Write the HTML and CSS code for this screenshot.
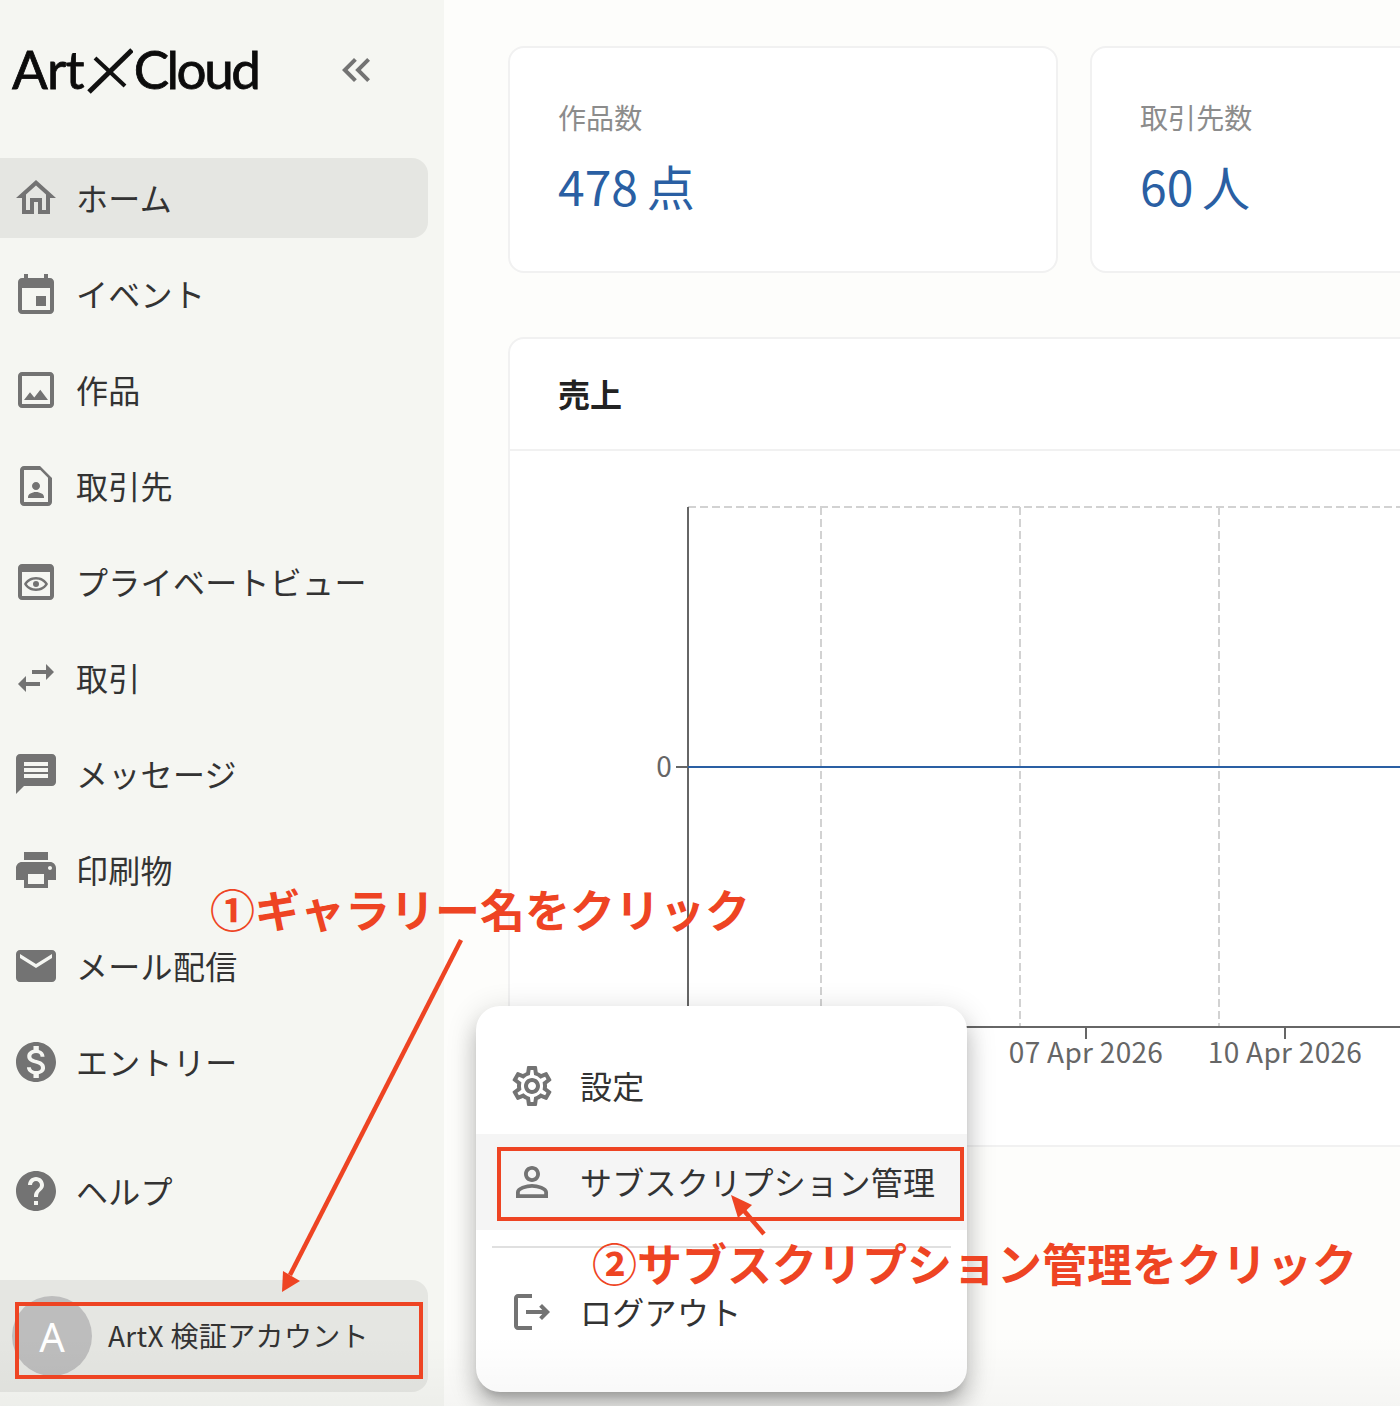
FILE: index.html
```html
<!DOCTYPE html>
<html lang="ja">
<head>
<meta charset="utf-8">
<title>ArtXCloud</title>
<link rel="stylesheet" href="styles.css">
</head>
<body>
<div class="page">
  <aside class="sidebar">
    <div class="brand">
      <div class="logo"><span class="logo-art">Art</span><svg class="logo-x" viewBox="0 0 46 46"><path d="M2 44 L45 2" stroke="#111" stroke-width="5" fill="none"/><path d="M8 10 L38 38" stroke="#111" stroke-width="4" fill="none"/></svg><span>Cloud</span></div>
      <svg class="icon collapse" viewBox="0 0 24 24"><path d="M17.59 18L19 16.59 14.42 12 19 7.41 17.59 6l-6 6z"/><path d="M11 18l1.41-1.41L7.83 12l4.58-4.58L11 6l-6 6z"/></svg>
    </div>
    <nav class="nav">
      <a class="nav-item active"><svg class="icon" viewBox="0 0 24 24"><path d="M12 5.69l5 4.5V18h-2v-6H9v6H7v-7.81l5-4.5M12 3L2 12h3v8h6v-6h2v6h6v-8h3L12 3z"/></svg><span>ホーム</span></a>
      <a class="nav-item"><svg class="icon" viewBox="0 0 24 24"><path d="M17 13h-5v5h5v-5zM16 2v2H8V2H6v2H5c-1.11 0-1.99.9-1.99 2L3 20c0 1.1.89 2 2 2h14c1.1 0 2-.9 2-2V6c0-1.1-.9-2-2-2h-1V2h-2zm3 18H5V9h14v11z"/></svg><span>イベント</span></a>
      <a class="nav-item"><svg class="icon" viewBox="0 0 24 24"><path d="M19 5v14H5V5h14m0-2H5c-1.1 0-2 .9-2 2v14c0 1.1.9 2 2 2h14c1.1 0 2-.9 2-2V5c0-1.1-.9-2-2-2zm-4.86 8.86l-3 3.87L9 13.14 6 17h12l-3.86-5.14z"/></svg><span>作品</span></a>
      <a class="nav-item"><svg class="icon" viewBox="0 0 24 24"><path d="M14.17 4L18 7.83V20H6V4h8.17M14 2H6c-1.1 0-2 .9-2 2v16c0 1.1.9 2 2 2h12c1.1 0 2-.9 2-2V8l-6-6zM12 14c1.1 0 2-.9 2-2s-.9-2-2-2-2 .9-2 2 .9 2 2 2zm4 3.58c0-.81-.48-1.53-1.22-1.85C14.01 15.36 13.03 15 12 15s-2.01.36-2.78.73C8.48 16.05 8 16.77 8 17.58V18h8v-.42z"/></svg><span>取引先</span></a>
      <a class="nav-item"><svg class="icon" viewBox="0 0 24 24"><path fill-rule="evenodd" d="M19 3H5c-1.11 0-2 .9-2 2v14c0 1.1.89 2 2 2h14c1.1 0 2-.9 2-2V5c0-1.1-.89-2-2-2zm0 16H5V7h14v12zm-7-9.500c-2.700 0-5 1.400-6 3.500 1 2.100 3.300 3.500 6 3.500s5-1.400 6-3.500c-1-2.100-3.300-3.500-6-3.500zm0 1.200c2 0 3.700.9 4.600 2.300-.9 1.400-2.600 2.300-4.600 2.300s-3.700-.9-4.600-2.300c.9-1.400 2.600-2.300 4.600-2.300zm0 .8a1.500 1.500 0 1 0 0 3 1.500 1.500 0 0 0 0-3z"/></svg><span>プライベートビュー</span></a>
      <a class="nav-item"><svg class="icon" viewBox="0 0 24 24"><path d="M6.99 11L3 15l3.99 4v-3H14v-2H6.99v-3zM21 9l-3.99-4v3H10v2h7.01v3L21 9z"/></svg><span>取引</span></a>
      <a class="nav-item"><svg class="icon" viewBox="0 0 24 24"><path d="M20 2H4c-1.1 0-1.99.9-1.99 2L2 22l4-4h14c1.1 0 2-.9 2-2V4c0-1.1-.9-2-2-2zm-2 12H6v-2h12v2zm0-3H6V9h12v2zm0-3H6V6h12v2z"/></svg><span>メッセージ</span></a>
      <a class="nav-item"><svg class="icon" viewBox="0 0 24 24"><path d="M19 8H5c-1.66 0-3 1.34-3 3v6h4v4h12v-4h4v-6c0-1.66-1.34-3-3-3zm-3 11H8v-5h8v5zm3-7c-.55 0-1-.45-1-1s.45-1 1-1 1 .45 1 1-.45 1-1 1zm-1-9H6v4h12V3z"/></svg><span>印刷物</span></a>
      <a class="nav-item"><svg class="icon" viewBox="0 0 24 24"><path d="M20 4H4c-1.1 0-1.99.9-1.99 2L2 18c0 1.1.9 2 2 2h16c1.1 0 2-.9 2-2V6c0-1.1-.9-2-2-2zm0 4l-8 5-8-5V6l8 5 8-5v2z"/></svg><span>メール配信</span></a>
      <a class="nav-item"><svg class="icon" viewBox="0 0 24 24"><path d="M12 2C6.48 2 2 6.48 2 12s4.48 10 10 10 10-4.48 10-10S17.52 2 12 2zm1.41 16.09V20h-2.67v-1.93c-1.71-.36-3.16-1.46-3.27-3.4h1.96c.1 1.05.82 1.87 2.65 1.87 1.96 0 2.4-.98 2.4-1.59 0-.83-.44-1.61-2.67-2.14-2.48-.6-4.18-1.62-4.18-3.67 0-1.72 1.39-2.84 3.11-3.21V4h2.67v1.95c1.86.45 2.79 1.86 2.85 3.39H14.3c-.05-1.11-.64-1.87-2.22-1.87-1.5 0-2.4.68-2.4 1.64 0 .84.65 1.39 2.67 1.91s4.18 1.39 4.18 3.91c-.01 1.83-1.38 2.83-3.12 3.16z"/></svg><span>エントリー</span></a>
      <a class="nav-item help"><svg class="icon" viewBox="0 0 24 24"><path d="M12 2C6.48 2 2 6.48 2 12s4.48 10 10 10 10-4.48 10-10S17.52 2 12 2zm1 17h-2v-2h2v2zm2.07-7.75l-.9.92C13.45 12.9 13 13.5 13 15h-2v-.5c0-1.1.45-2.1 1.17-2.83l1.24-1.26c.37-.36.59-.86.59-1.41 0-1.1-.9-2-2-2s-2 .9-2 2H8c0-2.21 1.79-4 4-4s4 1.79 4 4c0 .88-.36 1.68-.93 2.25z"/></svg><span>ヘルプ</span></a>
    </nav>
    <div class="account">
      <div class="avatar">A</div>
      <span class="account-name">ArtX 検証アカウント</span>
    </div>
  </aside>

  <main class="main">
    <section class="stats">
      <div class="card stat"><div class="stat-label">作品数</div><div class="stat-value">478 点</div></div>
      <div class="card stat"><div class="stat-label">取引先数</div><div class="stat-value">60 人</div></div>
    </section>
    <section class="card sales">
      <h2 class="sales-title">売上</h2>
      <svg class="chart" viewBox="510 451 1000 694">
        <path class="grid" d="M688 507H1500M821 507V1027M1020 507V1027M1219 507V1027"/>
        <path class="axis" d="M688 507V1027H1500M676 767H688M1086 1027V1039M1285 1027V1039"/>
        <path class="zero" d="M688 767H1500"/>
        <text class="tick" x="672" y="777" text-anchor="end">0</text>
        <text class="tick" x="1086" y="1063" text-anchor="middle">07 Apr 2026</text>
        <text class="tick" x="1285" y="1063" text-anchor="middle">10 Apr 2026</text>
      </svg>
    </section>
  </main>

  <div class="menu">
    <a class="menu-item"><svg class="icon" viewBox="0 0 24 24"><path d="M19.43 12.98c.04-.32.07-.64.07-.98 0-.34-.03-.66-.07-.98l2.11-1.65c.19-.15.24-.42.12-.64l-2-3.46c-.09-.16-.26-.25-.44-.25-.06 0-.12.01-.17.03l-2.49 1c-.52-.4-1.08-.73-1.69-.98l-.38-2.65C14.46 2.18 14.25 2 14 2h-4c-.25 0-.46.18-.49.42l-.38 2.65c-.61.25-1.17.59-1.69.98l-2.49-1c-.06-.02-.12-.03-.18-.03-.17 0-.34.09-.43.25l-2 3.46c-.13.22-.07.49.12.64l2.11 1.65c-.04.32-.07.65-.07.98 0 .33.03.66.07.98l-2.11 1.65c-.19.15-.24.42-.12.64l2 3.46c.09.16.26.25.44.25.06 0 .12-.01.17-.03l2.49-1c.52.4 1.08.73 1.69.98l.38 2.65c.03.24.24.42.49.42h4c.25 0 .46-.18.49-.42l.38-2.65c.61-.25 1.17-.59 1.69-.98l2.49 1c.06.02.12.03.18.03.17 0 .34-.09.43-.25l2-3.46c.12-.22.07-.49-.12-.64l-2.11-1.65zm-1.98-1.71c.04.31.05.52.05.73 0 .21-.02.43-.05.73l-.14 1.13.89.7 1.08.84-.7 1.21-1.27-.51-1.04-.42-.9.68c-.43.32-.84.56-1.25.73l-1.06.43-.16 1.13-.2 1.35h-1.4l-.19-1.35-.16-1.13-1.06-.43c-.43-.18-.83-.41-1.23-.71l-.91-.7-1.06.43-1.27.51-.7-1.21 1.08-.84.89-.7-.14-1.13c-.03-.31-.05-.54-.05-.74s.02-.43.05-.73l.14-1.13-.89-.7-1.08-.84.7-1.21 1.27.51 1.04.42.9-.68c.43-.32.84-.56 1.25-.73l1.06-.43.16-1.13.2-1.35h1.39l.19 1.35.16 1.13 1.06.43c.43.18.83.41 1.23.71l.91.7 1.06-.43 1.27-.51.7 1.21-1.07.85-.89.7.14 1.13zM12 8c-2.21 0-4 1.79-4 4s1.79 4 4 4 4-1.79 4-4-1.79-4-4-4zm0 6c-1.1 0-2-.9-2-2s.9-2 2-2 2 .9 2 2-.9 2-2 2z"/></svg><span>設定</span></a>
    <a class="menu-item hover"><svg class="icon" viewBox="0 0 24 24"><path d="M12 5.900c1.160 0 2.100.94 2.100 2.100s-.94 2.100-2.100 2.100S9.900 9.160 9.900 8s.94-2.100 2.100-2.100m0 9c2.970 0 6.100 1.460 6.100 2.100v1.100H5.900V17c0-.64 3.130-2.100 6.100-2.100M12 4C9.790 4 8 5.790 8 8s1.790 4 4 4 4-1.790 4-4-1.790-4-4-4zm0 9c-2.670 0-8 1.340-8 4v3h16v-3c0-2.660-5.330-4-8-4z"/></svg><span>サブスクリプション管理</span></a>
    <hr class="menu-divider">
    <a class="menu-item"><svg class="icon" viewBox="0 0 24 24"><path d="M17 8l-1.410 1.410L17.170 11H9v2h8.170l-1.580 1.580L17 16l4-4-4-4zM5 5h7V3H5c-1.100 0-2 .9-2 2v14c0 1.100.9 2 2 2h7v-2H5V5z"/></svg><span>ログアウト</span></a>
  </div>

  <div class="page-fade"></div>
  <div class="note note-one">①ギャラリー名をクリック</div>
  <div class="note note-two">②サブスクリプション管理をクリック</div>
  <div class="mark mark-account"></div>
  <div class="mark mark-sub"></div>
  <svg class="arrows" viewBox="0 0 1400 1406">
    <path class="arrow-line" d="M461 940L290 1275"/>
    <path class="arrow-head" d="M282 1292L283 1271L300 1281z"/>
    <path class="arrow-line" d="M764 1234L740 1206"/>
    <path class="arrow-head" d="M731 1195L752 1205L738 1218z"/>
  </svg>
</div>
</body>
</html>
```
FILE: styles.css
```css
* { box-sizing: border-box; }
html, body { margin: 0; padding: 0; }
body {
  font-family: "Noto Sans CJK JP", "Noto Sans", sans-serif;
  color: #333;
  background: #fdfdfb;
}
.page {
  position: relative;
  display: flex;
  width: 1400px;
  height: 1406px;
  overflow: hidden;
}
.icon {
  flex: none;
  width: 48px;
  height: 48px;
  fill: #737373;
}

/* sidebar */
.sidebar {
  flex: none;
  display: flex;
  flex-direction: column;
  width: 444px;
  height: 100%;
  background: #f5f6f2;
}
.brand {
  display: flex;
  align-items: center;
  height: 158px;
  padding: 0 0 18px 12px;
}
.logo {
  display: flex;
  align-items: center;
  width: 320px;
  margin-top: -3px;
  font-family: Lato, "Noto Sans", sans-serif;
  font-size: 53px;
  line-height: 60px;
  letter-spacing: -2.5px;
  color: #0c0c0c;
  -webkit-text-stroke: .8px #0c0c0c;
}
.logo-art { letter-spacing: -.8px; }
.logo-x {
  flex: none;
  width: 46px;
  height: 46px;
  margin: 5px 1px 0 3px;
}
.nav {
  display: flex;
  flex-direction: column;
  gap: 16px;
}
.nav-item {
  display: flex;
  align-items: center;
  gap: 16px;
  width: 428px;
  height: 80px;
  padding-left: 12px;
  border-radius: 0 16px 16px 0;
  font-size: 32px;
  line-height: 48px;
  letter-spacing: .3px;
}
.nav-item span { padding-bottom: 2px; }
.nav-item.active { background: #e5e6e2; }
.nav-item.help { margin-top: 33px; }
.account {
  display: flex;
  align-items: center;
  gap: 16px;
  width: 428px;
  height: 112px;
  margin-top: 49px;
  padding-left: 12px;
  border-radius: 0 16px 16px 0;
  background: #e5e6e2;
}
.avatar {
  flex: none;
  display: flex;
  align-items: center;
  justify-content: center;
  width: 80px;
  height: 80px;
  border-radius: 50%;
  background: #bdbdbd;
  color: #fff;
  font-family: "Noto Sans", sans-serif;
  font-size: 40px;
}
.account-name { padding-bottom: 2px; font-size: 28px; line-height: 40px; letter-spacing: .35px; }

/* main */
.main {
  flex: none;
  width: 956px;
  padding: 46px 0 0 64px;
  overflow: hidden;
}
.stats {
  display: flex;
  gap: 32px;
  width: 1300px;
}
.card {
  flex: none;
  background: #fff;
  border: 2px solid #f1f1f1;
  border-radius: 16px;
}
.stat {
  width: 550px;
  height: 227px;
  padding: 47px 48px;
}
.stat-label {
  font-size: 28px;
  line-height: 44px;
  letter-spacing: .1px;
  color: #8c8c8c;
}
.stat-value {
  margin-top: 14px;
  font-size: 48px;
  line-height: 64px;
  word-spacing: -2px;
  color: #2a5fa3;
}
.sales {
  width: 1300px;
  margin-top: 64px;
  height: 810px;
}
.sales-title {
  margin: 0;
  height: 112px;
  padding: 0 48px;
  font-size: 32px;
  font-weight: 700;
  line-height: 108px;
  color: #222;
  border-bottom: 2px solid #f1f1f1;
}
.chart {
  display: block;
  width: 1000px;
  height: 694px;
}
.grid { fill: none; stroke: #d2d2d2; stroke-width: 2; stroke-dasharray: 8 4; }
.axis { fill: none; stroke: #666; stroke-width: 2; }
.zero { fill: none; stroke: #2a5fa3; stroke-width: 2; }
.tick { font-size: 28px; letter-spacing: .3px; fill: #666; font-family: "Noto Sans CJK JP", "Noto Sans", sans-serif; }

/* popup menu */
.menu {
  position: absolute;
  left: 476px;
  top: 1006px;
  width: 491px;
  height: 386px;
  padding: 32px 0;
  background: #fff;
  border-radius: 24px;
  box-shadow: 0 10px 10px -6px rgba(0, 0, 0, .2), 0 16px 20px 2px rgba(0, 0, 0, .14), 0 6px 28px 4px rgba(0, 0, 0, .12);
}
.menu-item {
  display: flex;
  align-items: center;
  gap: 24px;
  height: 96px;
  padding-left: 32px;
  font-size: 32px;
  line-height: 48px;
  letter-spacing: .3px;
}
.menu-item span { padding-bottom: 2px; }
.menu-item.hover { background: #f5f5f5; }
.menu-divider {
  height: 2px;
  margin: 16px 16px;
  border: 0;
  background: #e0e0e0;
}

/* bottom fade and annotations */
.page-fade {
  position: absolute;
  left: 0;
  right: 0;
  bottom: 0;
  height: 70px;
  background: linear-gradient(rgba(0, 0, 0, 0), rgba(0, 0, 0, .03));
}
.note {
  position: absolute;
  font-size: 45px;
  font-weight: 700;
  line-height: 60px;
  color: #ee4423;
  white-space: nowrap;
}
.note-one { left: 210px; top: 879px; }
.note-two { left: 592px; top: 1233px; }
.mark {
  position: absolute;
  border: 4px solid #ee4423;
}
.mark-account { left: 15px; top: 1302px; width: 408px; height: 77px; }
.mark-sub { left: 497px; top: 1147px; width: 467px; height: 74px; }
.arrows {
  position: absolute;
  left: 0;
  top: 0;
  width: 1400px;
  height: 1406px;
  pointer-events: none;
}
.arrow-line { fill: none; stroke: #ee4423; stroke-width: 4.500; }
.arrow-head { fill: #ee4423; }
```
